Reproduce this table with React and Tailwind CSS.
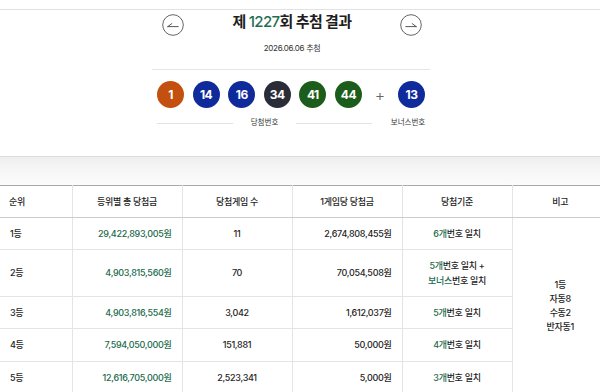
import React from 'react';

const balls = [
  { n: 1, color: 'bg-[#c4500f]' },
  { n: 14, color: 'bg-[#0f2a9a]' },
  { n: 16, color: 'bg-[#0f2a9a]' },
  { n: 34, color: 'bg-[#2a2c38]' },
  { n: 41, color: 'bg-[#1d5d1c]' },
  { n: 44, color: 'bg-[#1d5d1c]' },
];

const Ball = ({ n, color }) => (
  <div className={`w-[27px] h-[27px] rounded-full ${color} flex items-center justify-center text-white text-[12px] font-bold tracking-[-0.5px]`}>
    {n}
  </div>
);

const ArrowButton = ({ dir }) => (
  <svg width="22" height="22" viewBox="0 0 22 22" className="shrink-0">
    <circle cx="11" cy="11" r="10.3" fill="white" stroke="#555" strokeWidth="0.9" />
    {dir === 'left' ? (
      <path d="M5.8 12.6 H16.2 M5.8 12.6 L9.8 9.6" fill="none" stroke="#444" strokeWidth="0.9" strokeLinecap="round" />
    ) : (
      <path d="M5.8 12.6 H16.2 M16.2 12.6 L12.2 9.6" fill="none" stroke="#444" strokeWidth="0.9" strokeLinecap="round" />
    )}
  </svg>
);

const G = ({ children }) => <span className="text-[#226b4d]">{children}</span>;

const rows = [
  { rank: '1등', total: '29,422,893,005원', count: '11', per: '2,674,808,455원', crit: <><G>6개</G>번호 일치</>, h: 'h-[32px]' },
  {
    rank: '2등', total: '4,903,815,560원', count: '70', per: '70,054,508원',
    crit: <><div><G>5개</G>번호 일치 +</div><div className="mt-[3px]"><G>보너스</G>번호 일치</div></>,
    h: 'h-[47px]',
  },
  { rank: '3등', total: '4,903,816,554원', count: '3,042', per: '1,612,037원', crit: <><G>5개</G>번호 일치</>, h: 'h-[32px]' },
  { rank: '4등', total: '7,594,050,000원', count: '151,881', per: '50,000원', crit: <><G>4개</G>번호 일치</>, h: 'h-[33px]' },
  { rank: '5등', total: '12,616,705,000원', count: '2,523,341', per: '5,000원', crit: <><G>3개</G>번호 일치</>, h: 'h-[32px]' },
];

const cell = 'border-b border-r border-[#e4e4e4]';

export default function App() {
  return (
    <div className="w-[600px] h-[392px] overflow-hidden bg-white text-[#1e1e1e] font-['Inter','Noto_Sans_CJK_KR',sans-serif]">
      {/* draw card */}
      <div className="pt-[9px]">
        <div className="border-t border-[#e2e2e2]">
          <div className="w-[584px] flex items-start justify-center gap-[49px] h-[31px]">
            <div className="mt-[4px]"><ArrowButton dir="left" /></div>
            <h2 className="mt-[2px] text-[15px] leading-[20px] font-bold tracking-[-0.6px]">
              제 <span className="text-[#1f6f50] font-medium">1227</span>회 추첨 결과
            </h2>
            <div className="mt-[4px]"><ArrowButton dir="right" /></div>
          </div>
          <div className="w-[584px] text-center text-[8px] leading-[12px] mt-[1px] text-[#333] tracking-[-0.3px]">2026.06.06 추첨</div>
          <div className="ml-[152px] mt-[15px] w-[278px] h-px bg-[#e6e6e6]" />
          <div className="pl-[157px] mt-[11px] flex items-center">
            <div className="flex gap-[8.6px]">
              {balls.map((b) => <Ball key={b.n} {...b} />)}
            </div>
            <span className="w-[36px] text-center text-[16px] leading-none text-[#666] font-light">+</span>
            <Ball n={13} color="bg-[#0f2a9a]" />
          </div>
          <div className="pl-[157px] mt-[9px] flex items-center h-[12px] text-[7.5px] text-[#333]">
            <div className="w-[215px] flex items-center">
              <div className="flex-1 h-px bg-[#e3e3e3]" />
              <span className="px-[18px]">당첨번호</span>
              <div className="flex-1 h-px bg-[#e3e3e3]" />
            </div>
            <span className="w-[72px] text-center">보너스번호</span>
          </div>
          <div className="h-[27px]" />
        </div>
      </div>

      {/* gap band */}
      <div className="h-[29px] border-t border-[#dcdcdc] bg-gradient-to-b from-[#eeeeee] via-[#f7f7f7] to-[#fbfbfb]" />

      {/* prize table */}
      <table className="w-[608px] table-fixed border-collapse border-t border-[#a9a9a9] text-[9px] font-medium tracking-[-0.3px]">
        <colgroup>
          <col className="w-[72px]" />
          <col className="w-[110px]" />
          <col className="w-[110px]" />
          <col className="w-[110px]" />
          <col className="w-[110px]" />
          <col className="w-[96px]" />
        </colgroup>
        <thead>
          <tr className="h-[32px]">
            <th className="border-r border-b border-[#e4e4e4] border-b-[#cccccc] text-left pl-[9px] font-medium">순위</th>
            <th className="border-r border-b border-[#e4e4e4] border-b-[#cccccc] font-medium">등위별 총 당첨금</th>
            <th className="border-r border-b border-[#e4e4e4] border-b-[#cccccc] font-medium">당첨게임 수</th>
            <th className="border-r border-b border-[#e4e4e4] border-b-[#cccccc] font-medium">1게임당 당첨금</th>
            <th className="border-r border-b border-[#e4e4e4] border-b-[#cccccc] font-medium">당첨기준</th>
            <th className="border-b border-[#cccccc] font-medium">비고</th>
          </tr>
        </thead>
        <tbody>
          {rows.map((r, i) => (
            <tr key={r.rank} className={r.h}>
              <td className={`${cell} pl-[10px]`}>{r.rank}</td>
              <td className={`${cell} text-right pr-[10px] text-[#226b4d]`}>{r.total}</td>
              <td className={`${cell} text-center`}>{r.count}</td>
              <td className={`${cell} text-right pr-[10px]`}>{r.per}</td>
              <td className={`${cell} text-center leading-[12px]`}>{r.crit}</td>
              {i === 0 && (
                <td rowSpan={5} className="border-b border-[#e4e4e4] text-center leading-[14px]">
                  <div>1등</div>
                  <div>자동8</div>
                  <div>수동2</div>
                  <div>반자동1</div>
                </td>
              )}
            </tr>
          ))}
        </tbody>
      </table>
    </div>
  );
}
